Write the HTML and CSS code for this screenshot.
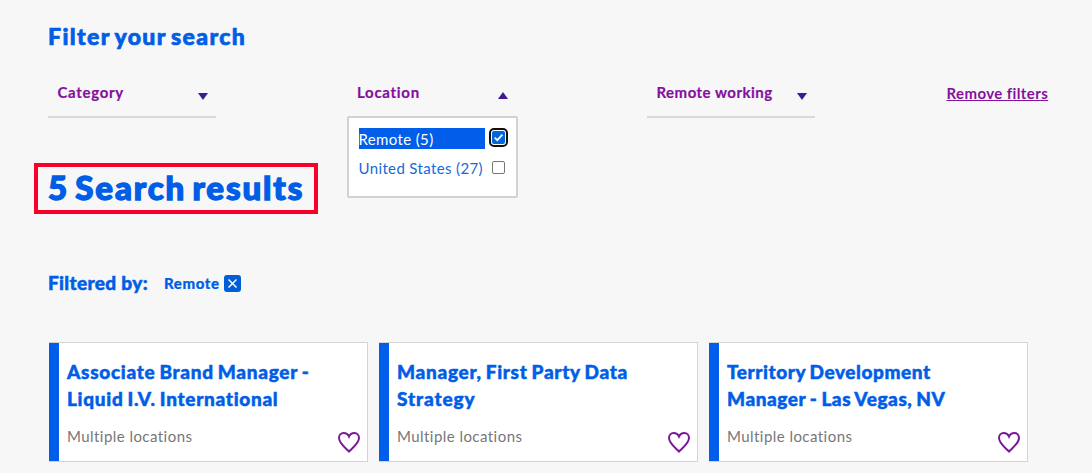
FILE: index.html
```html
<!DOCTYPE html>
<html lang="en">
<head>
<meta charset="utf-8">
<title>Job search</title>
<link rel="stylesheet" href="styles.css">
</head>
<body>
<main class="page">
  <h2 class="title">Filter your search</h2>
  <div class="filters">
    <div class="filter"><span class="label-short">Category</span><i class="caret"></i></div>
    <div class="filter open"><span class="label-short">Location</span><i class="caret up"></i>
      <div class="menu">
        <label class="option selected"><span class="name">Remote (5)</span><span class="check on"><svg viewBox="0 0 13 13"><path d="M2.700 6.700 5.300 9.200 10.400 3.600"/></svg></span></label>
        <label class="option"><span class="name">United States (27)</span><span class="check"></span></label>
      </div>
    </div>
    <div class="filter"><span class="label-long">Remote working</span><i class="caret"></i></div>
    <a class="remove">Remove filters</a>
  </div>
  <h1 class="results">5 Search results</h1>
  <div class="applied">
    <span class="applied-label">Filtered by:</span>
    <span class="tag">Remote</span>
    <svg class="close" viewBox="0 0 17 17"><rect width="17" height="17" rx="3"/><path d="M4.500 4.500l8 8M12.500 4.500l-8 8"/></svg>
  </div>
  <div class="cards">
    <article class="card">
      <h3>Associate Brand Manager -<br>Liquid I.V. International</h3>
      <p>Multiple locations</p>
      <svg class="heart" viewBox="0 0 24 22"><path d="M12 20.500C9 17.200 2 12.500 2 7 2 4 4 2 6.600 2 9 2 11 3.300 12 5.500 13 3.300 15 2 17.400 2 20 2 22 4 22 7 22 12.500 15 17.200 12 20.500Z"/></svg>
    </article>
    <article class="card">
      <h3>Manager, First Party Data<br><span class="wide">Strategy</span></h3>
      <p>Multiple locations</p>
      <svg class="heart" viewBox="0 0 24 22"><path d="M12 20.500C9 17.200 2 12.500 2 7 2 4 4 2 6.600 2 9 2 11 3.300 12 5.500 13 3.300 15 2 17.400 2 20 2 22 4 22 7 22 12.500 15 17.200 12 20.500Z"/></svg>
    </article>
    <article class="card">
      <h3 class="tight">Territory Development<br>Manager - Las Vegas, NV</h3>
      <p>Multiple locations</p>
      <svg class="heart" viewBox="0 0 24 22"><path d="M12 20.500C9 17.200 2 12.500 2 7 2 4 4 2 6.600 2 9 2 11 3.300 12 5.500 13 3.300 15 2 17.400 2 20 2 22 4 22 7 22 12.500 15 17.200 12 20.500Z"/></svg>
    </article>
  </div>
</main>
</body>
</html>
```
FILE: styles.css
```css
* { box-sizing: border-box; }
body { margin: 0; background: #f7f7f7; color: #005ee6; font-family: Lato, sans-serif; font-variant-ligatures: none; }
h1, h2, h3, p { margin: 0; }
.page { height: 473px; padding: 21px 0 0 48px; overflow: hidden; white-space: nowrap; }
.title { font-size: 23px; line-height: 30px; font-weight: 900; letter-spacing: 1.400px; word-spacing: -2.200px; -webkit-text-stroke: .7px currentColor; }
.filters { display: grid; grid-template-columns: 168px 168px 168px 102px; column-gap: 131.500px; margin-top: 25px; height: 42px; }
.filter { position: relative; display: flex; justify-content: space-between; height: 42px; padding: 5px 8px 0 9.500px; border-bottom: 2px solid #d8d8d8; color: #850f9e; font-size: 15px; line-height: 22px; font-weight: 700; -webkit-text-stroke: .2px currentColor; }
.label-short { letter-spacing: .700px; }
.label-long { letter-spacing: .480px; }
.caret { width: 0; height: 0; margin-top: 12px; border: 5.500px solid transparent; border-top: 7px solid #3d1a8f; border-bottom: 0; }
.caret.up { margin-top: 11px; border-top: 0; border-bottom: 7px solid #3d1a8f; }
.menu { position: absolute; z-index: 1; left: -1px; top: 40px; width: 171px; height: 82px; padding: 9px 8px 0 10px; background: #fff; border: 2px solid #d2d2d2; border-radius: 2px; color: #1869d8; font-size: 15px; line-height: 22px; font-weight: 400; letter-spacing: .370px; -webkit-text-stroke: 0; }
.option { display: flex; align-items: center; gap: 7px; height: 22px; margin-bottom: 8px; }
.name { width: 126px; }
.selected .name { height: 21px; background: #005eeb; color: #fff; }
.check { width: 13px; height: 13px; margin-top: -1px; border: 1px solid #777; border-radius: 2px; background: #fff; }
.check.on { border: 0; background: #0067dc; outline: 2px solid #101010; outline-offset: 1px; }
.check svg { display: block; fill: none; stroke: #fff; stroke-width: 1.800; }
.remove { padding-top: 6px; color: #850f9e; font-size: 15px; line-height: 22px; font-weight: 700; letter-spacing: .400px; text-decoration: underline; }
.results { width: 284px; height: 51px; margin: 45px 0 0 -14px; padding-left: 10px; border: 4px solid #fa0029; font-size: 33px; line-height: 40px; font-weight: 900; letter-spacing: 1.900px; word-spacing: -3.500px; -webkit-text-stroke: 1.4px currentColor; }
.applied { display: flex; align-items: center; height: 26px; margin-top: 56px; }
.applied-label { width: 116px; margin-top: -2px; font-size: 19px; font-weight: 900; letter-spacing: .340px; -webkit-text-stroke: .5px currentColor; }
.tag { width: 60px; margin-top: -1px; font-size: 15px; font-weight: 900; letter-spacing: .600px; -webkit-text-stroke: .2px currentColor; }
.close { width: 17px; height: 17px; fill: #005ed8; }
.close path { stroke: #fff; stroke-width: 1.500; }
.cards { display: grid; grid-template-columns: repeat(3, 319px); gap: 11px; margin: 46px 0 0 1px; }
.card { position: relative; height: 120px; padding: 15px 0 0 18px; background: linear-gradient(90deg, #005eeb 10px, #fff 10px); border: 1px solid #d4d4d4; border-left: 0; }
.card h3 { font-size: 19px; line-height: 27px; font-weight: 900; letter-spacing: .700px; word-spacing: -1.200px; -webkit-text-stroke: .5px currentColor; }
.card .tight { letter-spacing: .570px; }
.wide { letter-spacing: .900px; }
.card p { margin-top: 13px; color: #777; font-size: 15px; line-height: 22px; letter-spacing: .450px; }
.heart { position: absolute; right: 6px; bottom: 8px; width: 24px; height: 22px; fill: none; stroke: #7c1799; stroke-width: 2; }
```
